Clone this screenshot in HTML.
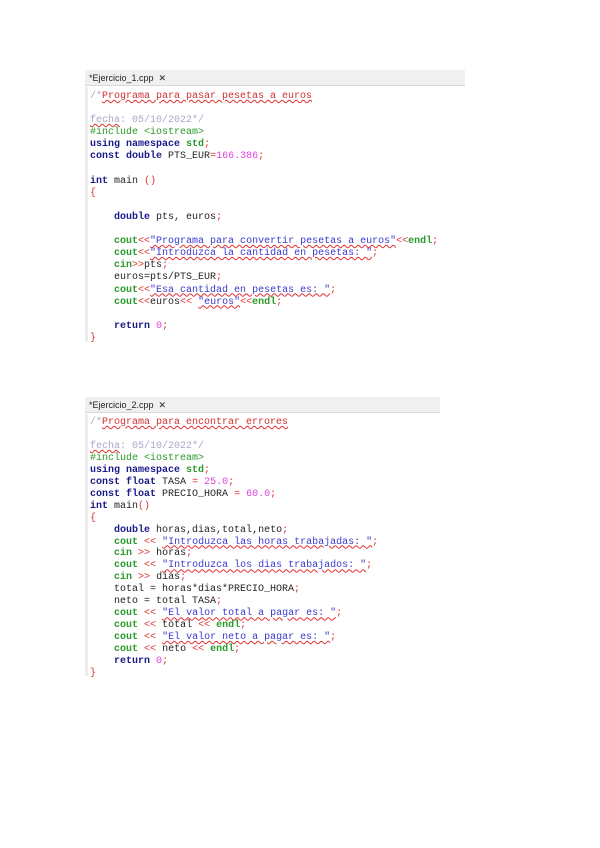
<!DOCTYPE html>
<html><head><meta charset="utf-8"><style>
body{margin:0;width:600px;height:848px;background:#fff;position:relative;overflow:hidden}
.tabbar{position:absolute;background:#f0f0f0;border-bottom:1px solid #d8d8d8;font:9px "Liberation Sans",sans-serif;color:#222}
.tabbar span{position:absolute;left:4px;top:3px}
.gut{position:absolute;width:3px;background:#ececec}
pre{position:absolute;margin:0;font:bold 10px/12px "Liberation Mono",monospace;color:#222}
.n{font-weight:normal}
.k{color:#1a1a8a}.g{color:#2a9a2a}.c{color:#a8a8c8;font-weight:normal}.s{color:#3a3ad0;font-weight:normal;text-decoration:underline wavy #e03030;text-decoration-thickness:1px}
.m{color:#e040e0;font-weight:normal}.r{color:#e03030;font-weight:normal}.p{color:#e03030}
.u{text-decoration:underline wavy #e03030;text-decoration-thickness:1px}
</style></head><body>
<div class="tabbar" style="left:85px;top:70px;width:380px;height:15px"><span>*Ejercicio_1.cpp &nbsp;✕</span></div>
<div class="gut" style="left:85px;top:87px;height:255px"></div>
<pre style="left:90px;top:91px;line-height:12.1px"><span class="c">/*<span class="u" style="color:#d03030">Programa para pasar pesetas a euros</span></span>

<span class="c"><span class="u">fecha</span>: 05/10/2022*/</span>
<span class="g n">#include &lt;iostream&gt;</span>
<span class="k">using namespace</span> <span class="g">std</span><span class="r">;</span>
<span class="k">const double</span> <span class="n">PTS_EUR</span><span class="r">=</span><span class="m">166.386</span><span class="r">;</span>

<span class="k">int</span> <span class="n">main</span> <span class="r">()</span>
<span class="r">{</span>

    <span class="k">double</span> <span class="n">pts, euros</span><span class="r">;</span>

    <span class="g">cout</span><span class="r">&lt;&lt;</span><span class="s">"Programa para convertir pesetas a euros"</span><span class="r">&lt;&lt;</span><span class="g">endl</span><span class="r">;</span>
    <span class="g">cout</span><span class="r">&lt;&lt;</span><span class="s">"Introduzca la cantidad en pesetas: "</span><span class="r">;</span>
    <span class="g">cin</span><span class="r">&gt;&gt;</span><span class="n">pts</span><span class="r">;</span>
    <span class="n">euros=pts/PTS_EUR</span><span class="r">;</span>
    <span class="g">cout</span><span class="r">&lt;&lt;</span><span class="s">"Esa cantidad en pesetas es: "</span><span class="r">;</span>
    <span class="g">cout</span><span class="r">&lt;&lt;</span><span class="n">euros</span><span class="r">&lt;&lt;</span> <span class="s">"euros"</span><span class="r">&lt;&lt;</span><span class="g">endl</span><span class="r">;</span>

    <span class="k">return</span> <span class="m">0</span><span class="r">;</span>
<span class="r">}</span></pre>

<div class="tabbar" style="left:85px;top:397px;width:355px;height:15px"><span>*Ejercicio_2.cpp &nbsp;✕</span></div>
<div class="gut" style="left:85px;top:414px;height:262px"></div>
<pre style="left:90px;top:417px;line-height:11.95px"><span class="c">/*<span class="u" style="color:#d03030">Programa para encontrar errores</span></span>

<span class="c"><span class="u">fecha</span>: 05/10/2022*/</span>
<span class="g n">#include &lt;iostream&gt;</span>
<span class="k">using namespace</span> <span class="g">std</span><span class="r">;</span>
<span class="k">const float</span> <span class="n">TASA</span> <span class="r">=</span> <span class="m">25.0</span><span class="r">;</span>
<span class="k">const float</span> <span class="n">PRECIO_HORA</span> <span class="r">=</span> <span class="m">60.0</span><span class="r">;</span>
<span class="k">int</span> <span class="n">main</span><span class="r">()</span>
<span class="r">{</span>
    <span class="k">double</span> <span class="n">horas,dias,total,neto</span><span class="r">;</span>
    <span class="g">cout</span> <span class="r">&lt;&lt;</span> <span class="s">"Introduzca las horas trabajadas: "</span><span class="r">;</span>
    <span class="g">cin</span> <span class="r">&gt;&gt;</span> <span class="n">horas</span><span class="r">;</span>
    <span class="g">cout</span> <span class="r">&lt;&lt;</span> <span class="s">"Introduzca los dias trabajados: "</span><span class="r">;</span>
    <span class="g">cin</span> <span class="r">&gt;&gt;</span> <span class="n">dias</span><span class="r">;</span>
    <span class="n">total = horas*dias*PRECIO_HORA</span><span class="r">;</span>
    <span class="n">neto = total TASA</span><span class="r">;</span>
    <span class="g">cout</span> <span class="r">&lt;&lt;</span> <span class="s">"El valor total a pagar es: "</span><span class="r">;</span>
    <span class="g">cout</span> <span class="r">&lt;&lt;</span> <span class="n">total</span> <span class="r">&lt;&lt;</span> <span class="g">endl</span><span class="r">;</span>
    <span class="g">cout</span> <span class="r">&lt;&lt;</span> <span class="s">"El valor neto a pagar es: "</span><span class="r">;</span>
    <span class="g">cout</span> <span class="r">&lt;&lt;</span> <span class="n">neto</span> <span class="r">&lt;&lt;</span> <span class="g">endl</span><span class="r">;</span>
    <span class="k">return</span> <span class="m">0</span><span class="r">;</span>
<span class="r">}</span></pre>
</body></html>
